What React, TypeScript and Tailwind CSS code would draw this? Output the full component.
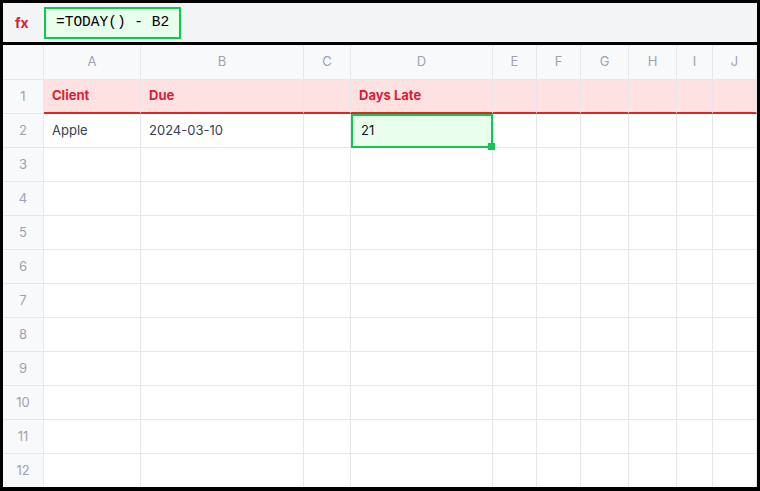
const cols = ["A", "B", "C", "D", "E", "F", "G", "H", "I", "J"];
const rows = [1, 2, 3, 4, 5, 6, 7, 8, 9, 10, 11, 12];

const data: Record<string, string> = {
  A1: "Client",
  B1: "Due",
  D1: "Days Late",
  A2: "Apple",
  B2: "2024-03-10",
  D2: "21",
};

function Cell({ col, row }: { col: string; row: number }) {
  const id = `${col}${row}`;
  const value = data[id];
  const selected = id === "D2";

  if (row === 1) {
    return (
      <div className="h-[34px] border-r border-b-2 border-r-[#e5e7eb] border-b-[#dc2626] bg-[#fee2e2] flex items-center px-[8px] text-[13px] font-bold text-[#d61f36]">
        {value}
      </div>
    );
  }

  if (selected) {
    return (
      <div className="relative h-[34px] border-2 border-[#10c850] bg-[#e8fdec] flex items-center px-[8px] text-[13px] text-[#111827]">
        {value}
        <span className="absolute -right-[4px] -bottom-[4px] w-[7px] h-[7px] bg-[#10c850]" />
      </div>
    );
  }

  return (
    <div className="h-[34px] border-r border-b border-[#e5e7eb] bg-white flex items-center px-[8px] text-[13px] text-[#374151]">
      {value}
    </div>
  );
}

export default function App() {
  return (
    <div className="w-[760px] h-[491px] bg-black pt-[3px] px-[3px] pb-[4px] font-['Inter',sans-serif]">
      <div className="flex flex-col h-full overflow-hidden bg-white">
        <div className="h-[39px] shrink-0 bg-[#f3f4f6] flex items-center">
          <span className="w-[41px] pl-[12px] text-[14px] font-bold text-[#d61f36]">fx</span>
          <div className="h-[32px] flex items-center px-[10px] border-2 border-[#10c850] bg-[#e8fdec] text-[14.5px] text-black font-['Liberation_Mono',monospace]">
            =TODAY() - B2
          </div>
        </div>
        <div className="h-[3px] shrink-0 bg-black" />
        <div className="grid grid-cols-[41px_97px_163px_47px_142px_44px_44px_48px_48px_36px_44px] grid-rows-[35px] auto-rows-[34px]">
          <div className="border-r border-b border-[#e5e7eb] bg-[#f8f9fb]" />
          {cols.map((c) => (
            <div
              key={c}
              className="border-r border-b border-[#e5e7eb] bg-[#f8f9fb] flex items-center justify-center text-[13px] text-[#9ca3af]"
            >
              {c}
            </div>
          ))}
          {rows.map((r) => (
            <div key={r} className="contents">
              <div className="border-r border-b border-[#e5e7eb] bg-[#f8f9fb] flex items-center justify-center text-[13px] text-[#9ca3af]">
                {r}
              </div>
              {cols.map((c) => (
                <Cell key={c} col={c} row={r} />
              ))}
            </div>
          ))}
        </div>
      </div>
    </div>
  );
}
